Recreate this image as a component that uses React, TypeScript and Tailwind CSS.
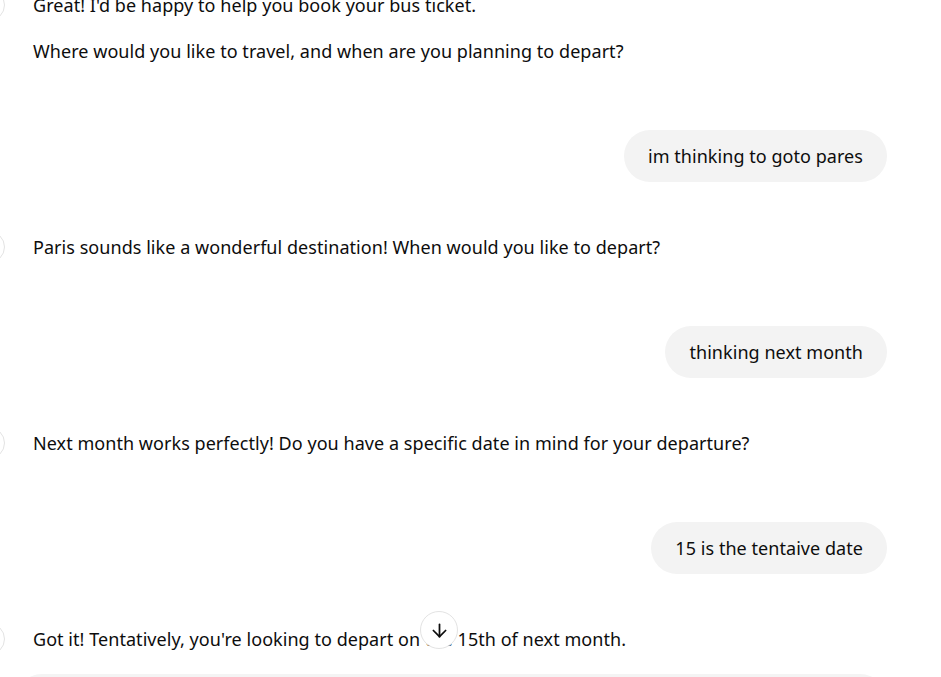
import React from "react";
import { ArrowDown } from "lucide-react";

const font = { fontFamily: '"Noto Sans", "Open Sans", sans-serif' };

function Assistant({ paras }: { paras: string[] }) {
  return (
    <div className="flex gap-7 ml-[-27px]">
      <div className="w-8 h-8 shrink-0 rounded-full border border-[#e3e3e3] bg-white my-[-2px]" />
      <div className="flex flex-col gap-[18px] text-[18px] leading-7 tracking-[0.05px] text-[#0d0d0d]">
        {paras.map((p, i) => (
          <p key={i}>{p}</p>
        ))}
      </div>
    </div>
  );
}

function User({ text }: { text: string }) {
  return (
    <div className="flex justify-end mt-[65px] mb-[51px]">
      <div className="rounded-[26px] bg-[#f3f3f3] px-6 py-3 text-[18px] leading-7 tracking-[0.05px] text-[#0d0d0d]">
        {text}
      </div>
    </div>
  );
}

export default function App() {
  return (
    <div className="relative h-[677px] w-[941px] overflow-hidden bg-white flex flex-col" style={font}>
      <div className="h-[674px] shrink-0 overflow-hidden">
        <div className="mt-[-9px] pr-[54px] pl-0">
          <Assistant
            paras={[
              "Great! I'd be happy to help you book your bus ticket.",
              "Where would you like to travel, and when are you planning to depart?",
            ]}
          />
          <User text="im thinking to goto pares" />
          <Assistant paras={["Paris sounds like a wonderful destination! When would you like to depart?"]} />
          <User text="thinking next month" />
          <Assistant
            paras={["Next month works perfectly! Do you have a specific date in mind for your departure?"]}
          />
          <User text="15 is the tentaive date" />
          <Assistant paras={["Got it! Tentatively, you're looking to depart on the 15th of next month."]} />
        </div>
      </div>
      <div className="ml-[14px] w-[874px] h-[100px] shrink-0 rounded-[28px] bg-[#f4f4f4]" />
      <button className="absolute left-[420px] top-[611px] w-[38px] h-[38px] rounded-full border border-[#e3e3e3] bg-white flex items-center justify-center text-[#0d0d0d]">
        <ArrowDown size={21} strokeWidth={2} />
      </button>
    </div>
  );
}
